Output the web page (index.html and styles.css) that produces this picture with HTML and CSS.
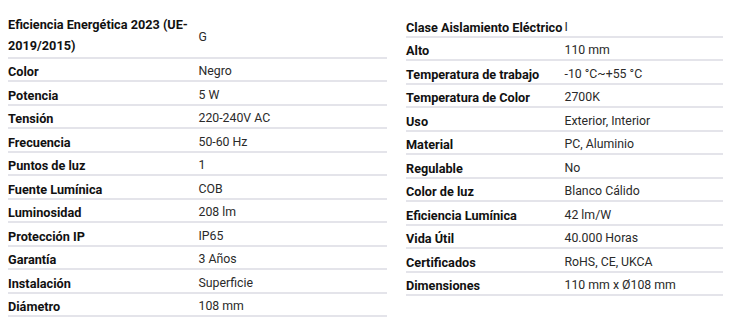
FILE: index.html
```html
<!DOCTYPE html>
<html lang="es">
<head>
<meta charset="utf-8">
<link rel="stylesheet" href="styles.css">
</head>
<body>
<div class="specs">
  <table class="spec-table spec-left">
    <tbody>
      <tr><th class="multi">Eficiencia Energética 2023 (UE-2019/2015)</th><td>G</td></tr>
      <tr><th>Color</th><td>Negro</td></tr>
      <tr><th>Potencia</th><td>5 W</td></tr>
      <tr><th>Tensión</th><td>220-240V AC</td></tr>
      <tr><th>Frecuencia</th><td>50-60 Hz</td></tr>
      <tr><th>Puntos de luz</th><td>1</td></tr>
      <tr><th>Fuente Lumínica</th><td>COB</td></tr>
      <tr><th>Luminosidad</th><td>208 lm</td></tr>
      <tr><th>Protección IP</th><td>IP65</td></tr>
      <tr><th>Garantía</th><td>3 Años</td></tr>
      <tr><th>Instalación</th><td>Superficie</td></tr>
      <tr><th>Diámetro</th><td>108 mm</td></tr>
    </tbody>
  </table>
  <table class="spec-table spec-right">
    <tbody>
      <tr><th>Clase Aislamiento Eléctrico</th><td>I</td></tr>
      <tr><th>Alto</th><td>110 mm</td></tr>
      <tr><th>Temperatura de trabajo</th><td>-10 °C~+55 °C</td></tr>
      <tr><th>Temperatura de Color</th><td>2700K</td></tr>
      <tr><th>Uso</th><td>Exterior, Interior</td></tr>
      <tr><th>Material</th><td>PC, Aluminio</td></tr>
      <tr><th>Regulable</th><td>No</td></tr>
      <tr><th>Color de luz</th><td>Blanco Cálido</td></tr>
      <tr><th>Eficiencia Lumínica</th><td>42 lm/W</td></tr>
      <tr><th>Vida Útil</th><td>40.000 Horas</td></tr>
      <tr><th>Certificados</th><td>RoHS, CE, UKCA</td></tr>
      <tr><th>Dimensiones</th><td>110 mm x Ø108 mm</td></tr>
    </tbody>
  </table>
</div>
</body>
</html>
```
FILE: styles.css
```css
html, body {
  margin: 0;
  padding: 0;
  background: #ffffff;
}
body {
  padding: 13px 8px 0 8px;
  font-family: Roboto, "Noto Sans", sans-serif;
  font-size: 12.5px;
  color: #222222;
}
.specs {
  display: flex;
  gap: 19px;
  align-items: flex-start;
}
.spec-table {
  border-collapse: collapse;
  table-layout: fixed;
}
.spec-left { width: 379px; }
.spec-right { width: 317px; margin-top: 1px; }
.spec-table th,
.spec-table td {
  padding: 4.5px 0 0 0;
  line-height: 17px;
  border-bottom: 2px solid #e4e4ea;
  text-align: left;
  vertical-align: middle;
  width: 50%;
}
.spec-table th {
  font-size: 12.7px;
  font-weight: 700;
  color: #111111;
  white-space: nowrap;
}
.spec-table th.multi {
  white-space: normal;
  line-height: 20.6px;
  padding-top: 2.4px;
  padding-right: 2px;
}
.spec-table td {
  font-size: 12.3px;
  font-weight: 400;
  color: #2a2a2a;
}
```
